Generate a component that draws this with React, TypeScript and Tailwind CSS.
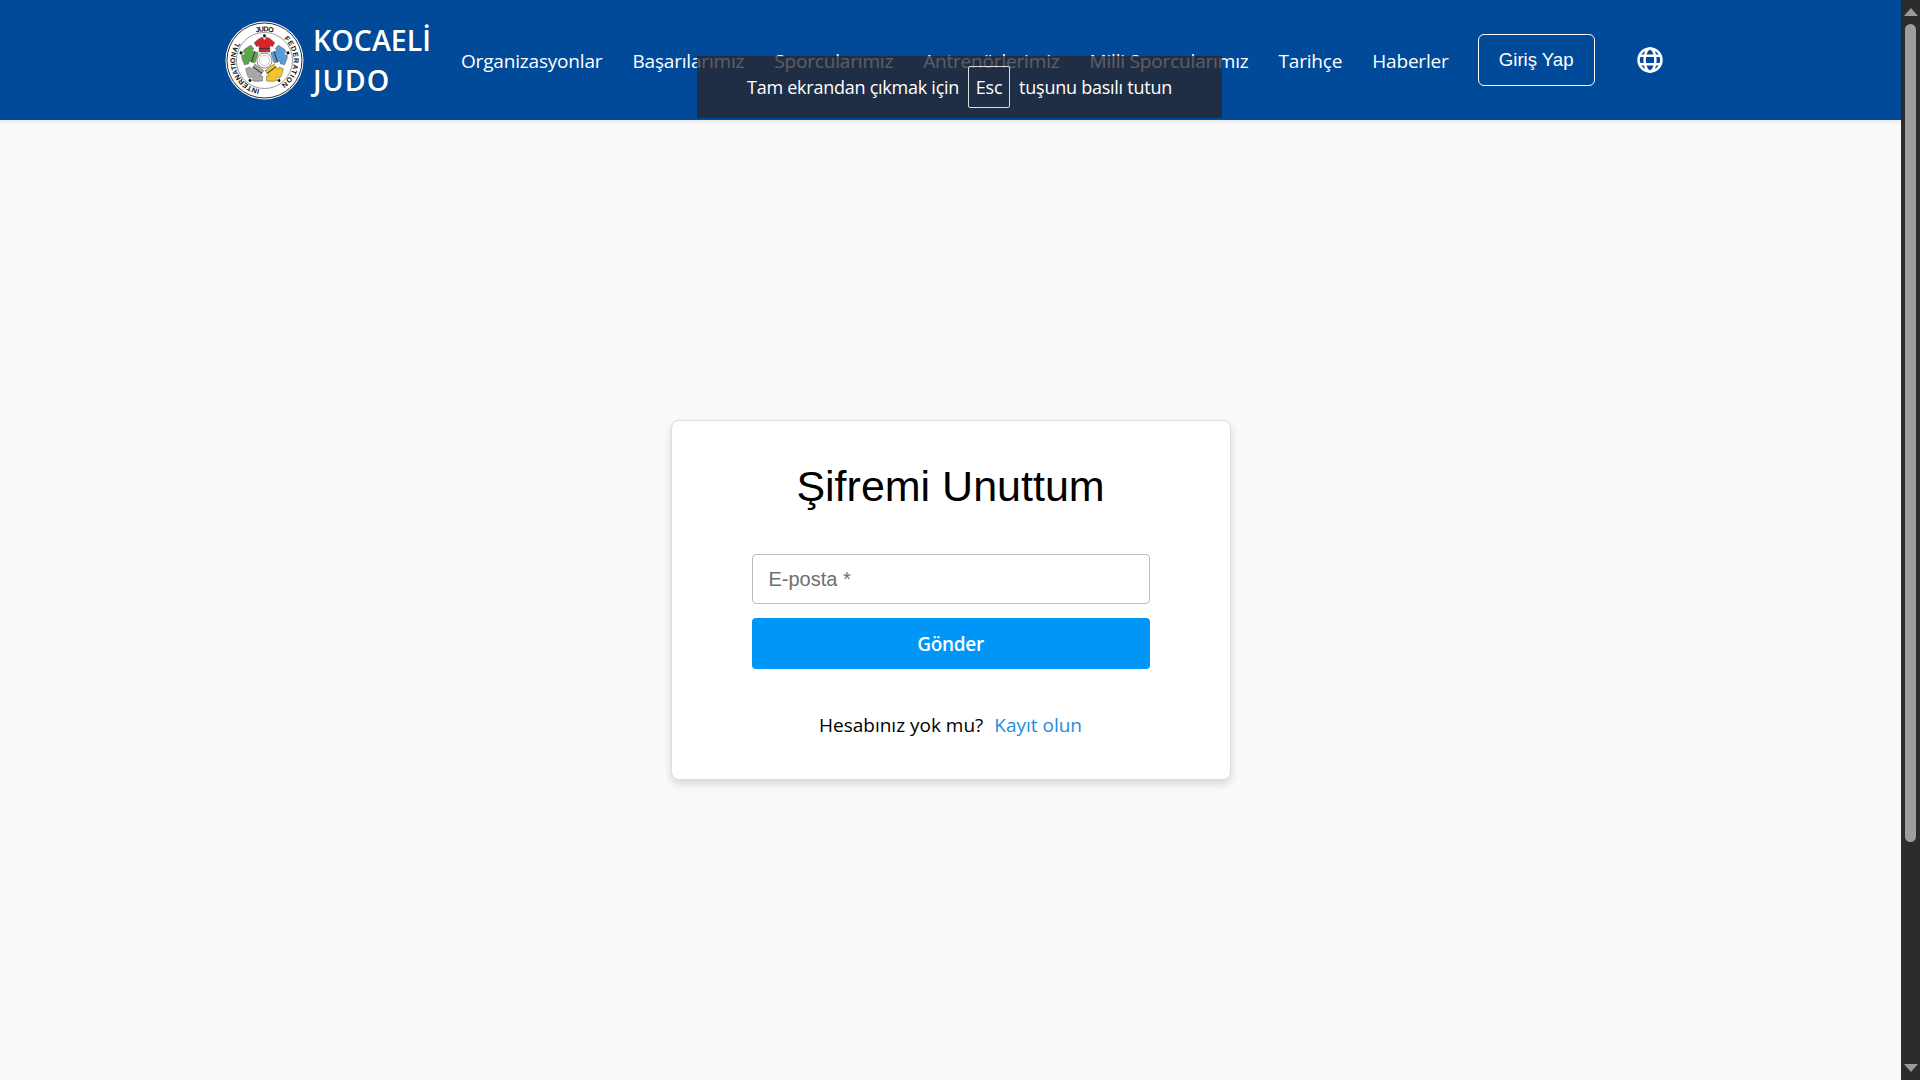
import React from "react";

const navItems = [
  "Organizasyonlar",
  "Başarılarımız",
  "Sporcularımız",
  "Antrenörlerimiz",
  "Milli Sporcularımız",
  "Tarihçe",
  "Haberler",
];

const jackets = [
  { angle: 0, fill: "#d6262b" },
  { angle: 72, fill: "#5a9bd8" },
  { angle: 144, fill: "#f0c52e" },
  { angle: 216, fill: "#a8a8a8" },
  { angle: 288, fill: "#5aa648" },
];

const ringFont = "Liberation Sans, sans-serif";

const JudoLogo = () => (
  <svg viewBox="0 0 80 80" className="w-[79px] h-[79px] shrink-0">
    <circle cx="40" cy="40" r="39.5" fill="#fff" />
    <circle cx="40" cy="40" r="38" fill="none" stroke="#111" strokeWidth="0.9" />
    <circle cx="40" cy="40" r="28.4" fill="none" stroke="#333" strokeWidth="0.5" />
    <defs>
      <path id="ring" d="M40 69.5A29.5 29.5 0 1 1 40 10.5A29.5 29.5 0 1 1 40 69.5" />
    </defs>
    <text fontSize="7.2" fontWeight="700" fontFamily={ringFont} fill="#111">
      <textPath href="#ring" startOffset="2.8%" textLength="59" lengthAdjust="spacing">
        INTERNATIONAL
      </textPath>
    </text>
    <text fontSize="7.2" fontWeight="700" fontFamily={ringFont} fill="#111">
      <textPath href="#ring" startOffset="45.3%" textLength="17.5" lengthAdjust="spacing">
        JUDO
      </textPath>
    </text>
    <text fontSize="7.2" fontWeight="700" fontFamily={ringFont} fill="#111">
      <textPath href="#ring" startOffset="61.7%" textLength="53" lengthAdjust="spacing">
        FEDERATION
      </textPath>
    </text>
    {jackets.map((j) => (
      <g key={j.angle} transform={`rotate(${j.angle} 40 40)`}>
        <path
          d="M35 17.5 L38 16.5 L42 16.5 L45 17.5 L50.5 22 L48 26 L45.5 24.8 L45.5 31.5 L34.5 31.5 L34.5 24.8 L32 26 L29.5 22 Z"
          fill={j.fill}
          stroke="#444"
          strokeWidth="0.4"
        />
        <path d="M38 16.6 L40 19.5 L42 16.6" fill="#fff" stroke="#444" strokeWidth="0.3" />
        <rect x="34.5" y="27.5" width="11" height="1" fill="#333" />
        <circle cx="40" cy="15" r="1.5" fill="#111" />
      </g>
    ))}
    <circle cx="40" cy="40" r="7.6" fill="#fff" stroke="#666" strokeWidth="0.8" />
    <circle cx="40" cy="40" r="5.2" fill="#fff" stroke="#aaa" strokeWidth="0.6" />
  </svg>
);

const GlobeIcon = () => (
  <svg viewBox="0 0 24 24" className="w-[26px] h-[26px]" fill="none" stroke="#fff" strokeWidth="2.3">
    <circle cx="12" cy="12" r="10.6" />
    <ellipse cx="12" cy="12" rx="5" ry="10.6" />
    <path d="M2.6 8h18.8M2.6 16h18.8" />
  </svg>
);

const Arrow = ({ down }: { down?: boolean }) => (
  <svg viewBox="0 0 14 8" className="w-[14px] h-[8px]" fill="#9a9a9a">
    <path d={down ? "M0 0h14L7 8z" : "M7 0l7 8H0z"} />
  </svg>
);

const App = () => {
  return (
    <div className="flex w-full h-screen overflow-hidden bg-[#fafafa] font-['Open_Sans',sans-serif]">
      <div className="relative flex flex-col flex-1 min-w-0">
        {/* Header */}
        <header className="flex items-center pl-[225px] h-[120px] bg-[#004a99] text-white shadow-[0_2px_4px_rgba(0,0,0,0.08)] shrink-0">
          <JudoLogo />
          <div className="ml-[9px] w-[148px] text-[28.6px] leading-[40px] font-semibold">
            <div>KOCAELİ</div>
            <div className="tracking-[1px]">JUDO</div>
          </div>
          <nav className="flex items-center gap-[30px] text-[19px] tracking-[-0.18px] pt-[2px]">
            {navItems.map((item) => (
              <a key={item} className="whitespace-nowrap">
                {item}
              </a>
            ))}
          </nav>
          <button className="ml-[29px] w-[117px] h-[52px] rounded-md border border-white text-[18.6px] font-['Liberation_Sans',sans-serif]">
            Giriş Yap
          </button>
          <div className="ml-[42px]">
            <GlobeIcon />
          </div>
        </header>

        {/* Fullscreen notice */}
        <div className="absolute top-[56px] left-[697px] flex justify-center items-center gap-[9px] w-[525px] h-[62px] bg-[#2b2629]/75 text-white text-[18px] tracking-[-0.25px]">
          <span>Tam ekrandan çıkmak için</span>
          <span className="flex justify-center items-center w-[42px] h-[42px] rounded-[2px] border border-[#dddddd] text-[18px]">
            Esc
          </span>
          <span>tuşunu basılı tutun</span>
        </div>

        {/* Card */}
        <main className="flex flex-1 justify-center pt-[300px]">
          <div className="flex flex-col items-center w-[560px] h-[360px] pt-[39px] rounded-lg border border-[#dedede] bg-white shadow-[0_4px_8px_rgba(0,0,0,0.14)]">
            <h1 className="text-[43px] leading-[52px] text-black font-['Liberation_Sans',sans-serif]">
              Şifremi Unuttum
            </h1>
            <input
              placeholder="E-posta *"
              className="w-[398px] h-[50px] mt-[42px] px-4 rounded-[4px] border border-[#bdbdbd] text-[20px] font-['Liberation_Sans',sans-serif] placeholder:text-[#6f6f6f] outline-none"
            />
            <button className="w-[398px] h-[51px] mt-[14px] pt-[2px] rounded-[4px] bg-[#0096f7] text-white text-[19px] font-semibold tracking-[-0.3px]">
              Gönder
            </button>
            <p className="mt-[42px] text-[19px] leading-[28px] text-black">
              Hesabınız yok mu?<span className="ml-[11px] text-[#1f8ce0]">Kayıt olun</span>
            </p>
          </div>
        </main>
      </div>

      {/* Scrollbar */}
      <aside className="flex flex-col items-center w-[19px] h-full pt-2 pb-2 bg-[#2c2c2c] shrink-0">
        <Arrow />
        <div className="w-[11px] h-[818px] mt-2 rounded-full bg-[#9e9e9e]" />
        <div className="flex-1" />
        <Arrow down />
      </aside>
    </div>
  );
};

export default App;
